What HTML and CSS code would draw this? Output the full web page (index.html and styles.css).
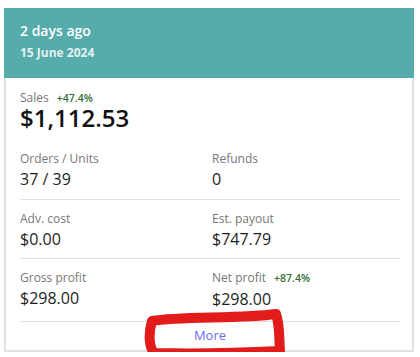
FILE: index.html
```html
<!DOCTYPE html>
<html>
<head>
<meta charset="utf-8">
<link rel="stylesheet" href="styles.css">
</head>
<body>
<div class="card">
  <div class="head">
    <div class="ago">2 days ago</div>
    <div class="date">15 June 2024</div>
  </div>
  <div class="body">
    <div class="section first">
      <div class="label sales">Sales <span class="delta">+47.4%</span></div>
      <div class="big">$1,112.53</div>
      <div class="grid orders">
        <div><div class="label">Orders / Units</div><div class="val">37 / 39</div></div>
        <div><div class="label">Refunds</div><div class="val">0</div></div>
      </div>
    </div>
    <div class="section">
      <div class="grid">
        <div><div class="label">Adv. cost</div><div class="val">$0.00</div></div>
        <div><div class="label">Est. payout</div><div class="val">$747.79</div></div>
      </div>
    </div>
    <div class="section last">
      <div class="grid">
        <div><div class="label">Gross profit</div><div class="val">$298.00</div></div>
        <div><div class="label">Net profit <span class="delta">+87.4%</span></div><div class="val">$298.00</div></div>
      </div>
    </div>
    <div class="more"><a href="#">More</a></div>
  </div>
</div>
<svg class="scribble" width="150" height="52" viewBox="0 0 150 52">
  <path d="M12 16 C40 11 100 14 136 9 C140 20 139 35 140 46 C100 48 50 49 14 48 C8 40 9 26 12 16 Z" fill="none" stroke="#e21b1b" stroke-width="10" stroke-linejoin="round" stroke-linecap="round"/>
</svg>
</body>
</html>
```
FILE: styles.css
```css
html, body { margin: 0; padding: 0; background: #fff; }
body { padding: 8px 6px 0 4px; font-family: "Open Sans", "Noto Sans", sans-serif; position: relative; }
.card { width: 410px; }
.head { background: #56abab; height: 70px; box-sizing: border-box; padding: 12.6px 16px 0; color: #fff; }
.ago { font-size: 14px; font-weight: 600; line-height: 20px; }
.date { font-size: 12px; font-weight: 700; line-height: 17px; margin-top: 3px; color: #e2f1f1; }
.body { border: 2px solid #e2e2e2; border-top: 0; padding: 0 12px 0 14px; }
.section { border-bottom: 1px solid #e2e2e2; padding: 10px 0 8px; }
.section.first { padding-top: 12.4px; padding-bottom: 9px; }
.section.last { padding-bottom: 11px; }
.label { font-size: 12px; color: #777; line-height: 17px; }
.label.sales { line-height: 15px; }
.delta { font-size: 10.5px; font-weight: 600; color: #2f6e33; margin-left: 5px; }
.big { font-size: 24px; font-weight: 600; color: #111; line-height: 24px; }
.orders { margin-top: 20px; }
.val { font-size: 16px; color: #1e1e1e; line-height: 22px; margin-top: 1px; }
.grid { display: grid; grid-template-columns: 192px 1fr; }
.more { text-align: center; padding: 4px 0 5px; font-size: 13px; line-height: 19px; }
.more a { color: #6b6bf3; text-decoration: none; }
.scribble { position: absolute; left: 140px; top: 305px; }
```
